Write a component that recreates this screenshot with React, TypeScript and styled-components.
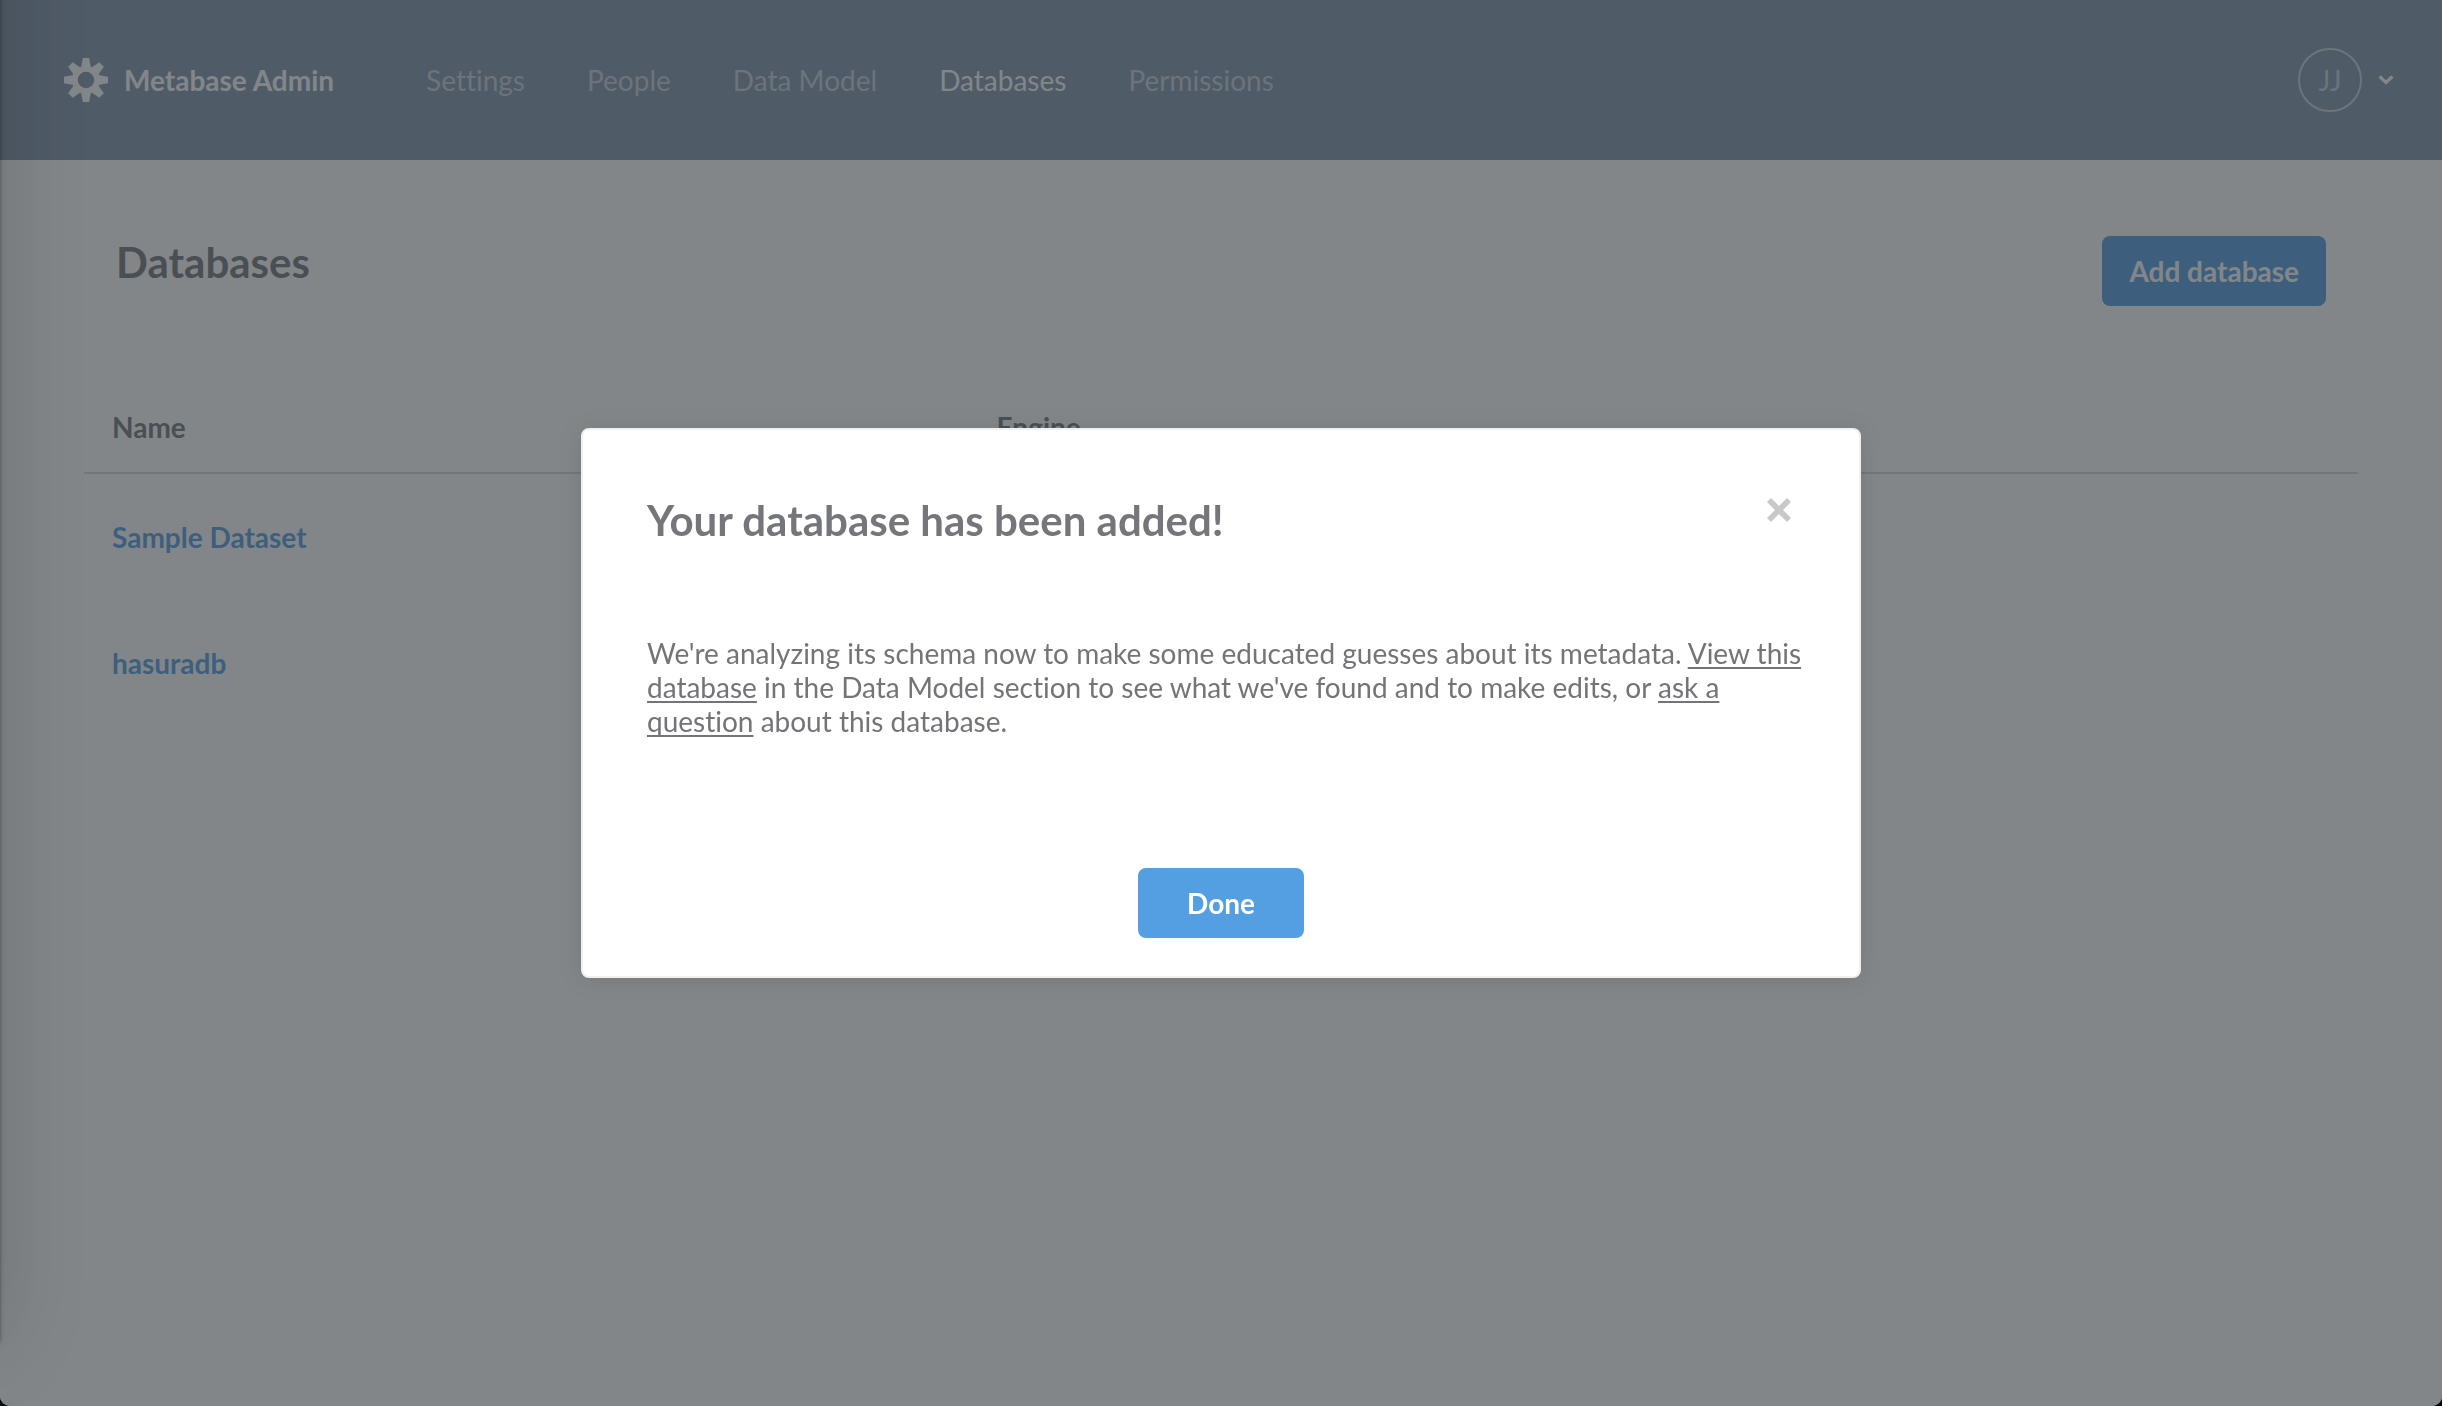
import React from "react";
import styled, { createGlobalStyle } from "styled-components";

const colors = {
  brand: "#539fe2",
  navbar: "#8093aa",
  text: "#727479",
  heading: "#74767b",
  border: "#f0f0f0",
  muted: "rgba(255, 255, 255, 0.58)",
};

const GlobalStyle = createGlobalStyle`
  *, *::before, *::after { box-sizing: border-box; }
  html, body { margin: 0; background: #05060a; }
  body {
    font-family: Lato, "Open Sans", sans-serif;
    font-size: 28px;
    line-height: 34px;
    font-variant-ligatures: none;
    -webkit-font-smoothing: antialiased;
  }
  button { font: inherit; cursor: pointer; }
  a { color: inherit; text-decoration: none; }
`;

const Window = styled.div`
  position: relative;
  min-height: 100vh;
  background: #fff;
  border-radius: 0 0 10px 10px;
  overflow: hidden;
`;

const Navbar = styled.header`
  display: flex;
  align-items: center;
  height: 160px;
  padding: 0 48px 0 64px;
  background: ${colors.navbar};
  color: #fff;
`;

const Brand = styled.a`
  display: flex;
  align-items: center;
  gap: 16px;
  font-weight: 700;
`;

const NavLinks = styled.nav`
  display: flex;
  gap: 62px;
  margin-left: 92px;
`;

const NavLink = styled.a<{ $active?: boolean }>`
  color: ${(p) => (p.$active ? "#fff" : colors.muted)};
`;

const Profile = styled.button`
  display: flex;
  align-items: center;
  gap: 16px;
  margin-left: auto;
  padding: 0;
  border: 0;
  background: none;
  color: #fff;
`;

const Avatar = styled.span`
  display: flex;
  align-items: center;
  justify-content: center;
  width: 64px;
  height: 64px;
  border: 2px solid ${colors.muted};
  border-radius: 50%;
  color: ${colors.muted};
`;

const Main = styled.main`
  padding: 76px 84px;
`;

const PageHeader = styled.section`
  display: flex;
  align-items: flex-start;
  justify-content: space-between;
  padding: 0 32px;
`;

const Title = styled.h2`
  margin: 0;
  font-size: 42px;
  line-height: 52px;
  font-weight: 700;
  color: ${colors.heading};
`;

const Button = styled.button<{ $wide?: boolean }>`
  height: 70px;
  padding: 0 ${(p) => (p.$wide ? 49 : 27)}px;
  border: 0;
  border-radius: 8px;
  background: ${colors.brand};
  color: #fff;
  font-weight: 700;
`;

const Table = styled.table`
  width: 100%;
  margin-top: 80px;
  border-collapse: separate;
  border-spacing: 0;
  table-layout: fixed;
  text-align: left;
`;

const HeadCell = styled.th<{ $width?: string }>`
  width: ${(p) => p.$width ?? "auto"};
  height: 88px;
  padding: 0 28px 4px;
  border-bottom: 2px solid #d4d8da;
  color: ${colors.heading};
  font-weight: 700;
`;

const Cell = styled.td`
  height: 126px;
  padding: 0 28px;
  color: ${colors.brand};
  font-weight: 700;
`;

const Backdrop = styled.div`
  position: fixed;
  inset: 0;
  display: flex;
  align-items: center;
  justify-content: center;
  border-radius: 0 0 10px 10px;
  background: rgba(46, 53, 59, 0.6);
`;

const Modal = styled.section`
  width: 1280px;
  max-width: 90%;
  padding: 64px 0 38px;
  border: 2px solid ${colors.border};
  border-radius: 8px;
  background: #fff;
  box-shadow: 0 2px 24px rgba(0, 0, 0, 0.1);
  color: ${colors.text};
`;

const ModalHeader = styled.div`
  display: flex;
  align-items: flex-start;
  justify-content: space-between;
  padding: 0 64px;
`;

const CloseButton = styled.button`
  display: flex;
  padding: 0;
  border: 0;
  background: none;
  color: #c7c8ca;
`;

const Message = styled.p`
  margin: 90px 0 130px;
  padding: 0 48px 0 64px;
`;

const TextLink = styled.a`
  text-decoration: underline;
  text-decoration-thickness: 2px;
  text-underline-offset: 3px;
  text-decoration-skip-ink: none;
`;

const ModalFooter = styled.div`
  display: flex;
  justify-content: center;
`;

const EdgeShadow = styled.div`
  position: fixed;
  top: -200px;
  bottom: 64px;
  left: -200px;
  width: 200px;
  pointer-events: none;
  box-shadow: 0 0 90px rgba(0, 0, 0, 0.16), 0 0 4px rgba(0, 0, 0, 0.4);
`;

const toothAngles = [0, 45, 90, 135, 180, 225, 270, 315];

const GearIcon = () => (
  <svg width="44" height="44" viewBox="-22 -22 44 44" fill="currentColor" aria-hidden="true">
    <path
      fillRule="evenodd"
      d="M-14 0a14 14 0 1 0 28 0a14 14 0 1 0 -28 0zM-8.2 0a8.2 8.2 0 1 0 16.4 0a8.2 8.2 0 1 0 -16.4 0z"
    />
    {toothAngles.map((angle) => (
      <path key={angle} d="M-3.2 -22H3.2L4.9 -12.5H-4.9z" transform={`rotate(${angle})`} />
    ))}
  </svg>
);

const ChevronIcon = () => (
  <svg width="16" height="10" viewBox="0 0 16 10" fill="none" aria-hidden="true">
    <path d="M1.6 1.6L8 7.4L14.4 1.6" stroke="currentColor" strokeWidth="3.4" />
  </svg>
);

const CloseIcon = () => (
  <svg width="32" height="32" viewBox="0 0 32 32" fill="currentColor" aria-hidden="true">
    <path d="M4 8L8 4L16 12L24 4L28 8L20 16L28 24L24 28L16 20L8 28L4 24L12 16z" />
  </svg>
);

const links = ["Settings", "People", "Data Model", "Databases", "Permissions"];
const databases = ["Sample Dataset", "hasuradb"];

export default function App() {
  return (
    <>
      <GlobalStyle />
      <Window>
        <Navbar>
          <Brand href="#">
            <GearIcon />
            Metabase Admin
          </Brand>
          <NavLinks>
            {links.map((label) => (
              <NavLink key={label} href="#" $active={label === "Databases"}>
                {label}
              </NavLink>
            ))}
          </NavLinks>
          <Profile aria-label="Profile menu">
            <Avatar>JJ</Avatar>
            <ChevronIcon />
          </Profile>
        </Navbar>
        <Main>
          <PageHeader>
            <Title>Databases</Title>
            <Button>Add database</Button>
          </PageHeader>
          <Table>
            <thead>
              <tr>
                <HeadCell $width="38.9%">Name</HeadCell>
                <HeadCell>Engine</HeadCell>
              </tr>
            </thead>
            <tbody>
              {databases.map((name) => (
                <tr key={name}>
                  <Cell>
                    <a href="#">{name}</a>
                  </Cell>
                  <Cell />
                </tr>
              ))}
            </tbody>
          </Table>
        </Main>
      </Window>
      <Backdrop>
        <Modal role="dialog" aria-modal="true" aria-labelledby="modal-title">
          <ModalHeader>
            <Title id="modal-title">Your database has been added!</Title>
            <CloseButton aria-label="Close">
              <CloseIcon />
            </CloseButton>
          </ModalHeader>
          <Message>
            We're analyzing its schema now to make some educated guesses about its metadata.{" "}
            <TextLink href="#">View this database</TextLink> in the Data Model section to see what
            we've found and to make edits, or <TextLink href="#">ask a question</TextLink> about this
            database.
          </Message>
          <ModalFooter>
            <Button $wide>Done</Button>
          </ModalFooter>
        </Modal>
      </Backdrop>
      <EdgeShadow aria-hidden="true" />
    </>
  );
}
